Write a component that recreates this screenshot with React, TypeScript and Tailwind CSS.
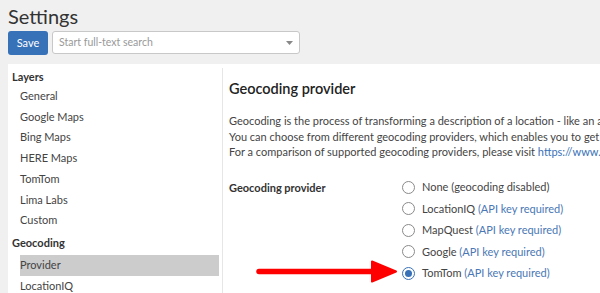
export default function App() {
  const layers = ['General', 'Google Maps', 'Bing Maps', 'HERE Maps', 'TomTom', 'Lima Labs', 'Custom']
  const geocoding = ['Provider', 'LocationIQ']
  const providers = [
    { name: 'None (geocoding disabled)', key: false },
    { name: 'LocationIQ', key: true },
    { name: 'MapQuest', key: true },
    { name: 'Google', key: true },
    { name: 'TomTom', key: true, checked: true },
  ]

  return (
    <div className="relative w-[600px] h-[293px] overflow-hidden bg-[#f0f0f0] text-[#333] font-['Lato',sans-serif]">
      {/* Header */}
      <h1 className="pl-2 pt-[3px] text-[20px] leading-[27px] text-[#333]">Settings</h1>
      <div className="flex gap-1 pl-2 mt-[1px]">
        <button className="w-10 h-6 rounded-[3px] bg-[#3771b8] text-white text-[11px]">Save</button>
        <div className="w-[248px] h-[23px] bg-white border border-[#c8c8c8] rounded-[3px] flex items-center justify-between pl-[6px] pr-[6px]">
          <span className="text-[10.5px] text-[#999]">Start full-text search</span>
          <svg width="7" height="4" viewBox="0 0 7 4"><path d="M0 0h7L3.5 4z" fill="#888" /></svg>
        </div>
      </div>

      {/* Body */}
      <div className="flex ml-2 mt-[9px] bg-white h-[240px]">
        <aside className="w-[215px] pr-[3px] border-r border-[#e6e6e6] mt-1">
          <div className="pl-1 text-[11px] font-bold leading-[18px]">Layers</div>
          {layers.map((l) => (
            <div key={l} className="pl-3 text-[11px] leading-[20.7px] text-[#444]">{l}</div>
          ))}
          <div className="pl-1 mt-[2px] text-[11px] font-bold leading-[20px]">Geocoding</div>
          {geocoding.map((g) => (
            <div key={g} className={'ml-3 text-[11px] leading-[20.7px] text-[#444] ' + (g === 'Provider' ? 'bg-[#cccccc] mt-[2px]' : '')}>
              {g}
            </div>
          ))}
        </aside>

        <main className="flex-1 pl-[6px] pt-[15px] whitespace-nowrap overflow-hidden">
          <h2 className="text-[14.5px] leading-[20px] font-semibold text-[#222]">Geocoding provider</h2>
          <div className="mt-[14px] text-[11px] leading-[15.5px] text-[#444]">
            <p>Geocoding is the process of transforming a description of a location - like an address, a name or coordinates - into a location on the map.</p>
            <p>You can choose from different geocoding providers, which enables you to get the best results for your region.</p>
            <p>
              For a comparison of supported geocoding providers, please visit{' '}
              <span className="text-[#3771b8]">https://www.mapsmarker.com/geocoding/</span>
            </p>
          </div>

          <div className="flex mt-[17px]">
            <div className="w-[173px] text-[11px] font-bold leading-[21.5px]">Geocoding provider</div>
            <div className="flex flex-col">
              {providers.map((p) => (
                <label key={p.name} className="flex items-center gap-[7px] h-[21.5px] text-[11px] text-[#444]">
                  <span
                    className={
                      'w-[13px] h-[13px] rounded-full border flex items-center justify-center ' +
                      (p.checked ? 'border-[#3771b8]' : 'border-[#8a8a8a]')
                    }
                  >
                    {p.checked && <span className="w-[7px] h-[7px] rounded-full bg-[#3771b8]" />}
                  </span>
                  <span>
                    {p.name}
                    {p.key && <span className="text-[#4a78b5]"> (API key required)</span>}
                  </span>
                </label>
              ))}
            </div>
          </div>
        </main>
      </div>

      {/* Annotation arrow */}
      <svg className="absolute left-[256px] top-[260px]" width="142" height="24" viewBox="0 0 142 24">
        <path d="M3 11.5H118" stroke="#ff0000" strokeWidth="5.5" strokeLinecap="round" />
        <path d="M116 1.5L140 11.5L116 21.5Z" fill="#ff0000" stroke="#ff0000" strokeWidth="2" strokeLinejoin="round" />
      </svg>
    </div>
  )
}
